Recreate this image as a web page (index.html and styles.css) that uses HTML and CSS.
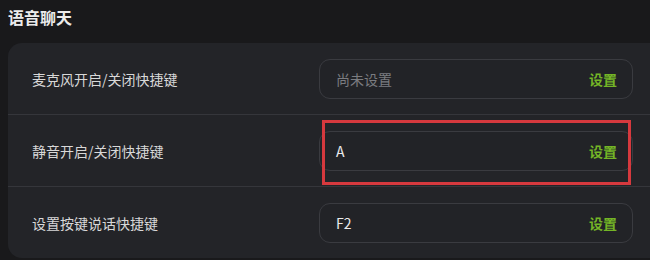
FILE: index.html
```html
<!DOCTYPE html>
<html lang="zh-CN">
<head>
<meta charset="utf-8">
<link rel="stylesheet" href="styles.css">
</head>
<body>
<div class="page">
  <h1 class="title">语音聊天</h1>
  <div class="card">
    <div class="row">
      <div class="label">麦克风开启/关闭快捷键</div>
      <div class="field">
        <span class="value placeholder">尚未设置</span>
        <span class="action">设置</span>
      </div>
    </div>
    <div class="row highlighted">
      <div class="label">静音开启/关闭快捷键</div>
      <div class="field">
        <span class="value">A</span>
        <span class="action">设置</span>
      </div>
      <div class="annot"></div>
    </div>
    <div class="row">
      <div class="label">设置按键说话快捷键</div>
      <div class="field">
        <span class="value">F2</span>
        <span class="action">设置</span>
      </div>
    </div>
  </div>
</div>
</body>
</html>
```

FILE: styles.css
```css
html, body {
  margin: 0;
  padding: 0;
  background: #19191b;
  overflow: hidden;
  width: 650px;
  height: 260px;
}
body {
  font-family: "Noto Sans CJK SC", "Noto Sans", sans-serif;
  color: #e0e0e0;
}
.page {
  padding: 0 0 0 8px;
}
.title {
  margin: 0;
  height: 43px;
  line-height: 34px;
  font-size: 16px;
  font-weight: 700;
  color: #ececec;
}
.card {
  background: #232428;
  border-radius: 14px 0 0 14px;
}
.row {
  position: relative;
  display: grid;
  grid-template-columns: 287px 314px;
  align-items: center;
  height: 71px;
  padding-left: 24px;
  border-bottom: 1px solid #35363b;
}
.row:last-child {
  border-bottom: none;
  height: 71px;
}
.label {
  font-size: 14px;
  color: #d8d8d8;
}
.field {
  display: flex;
  align-items: center;
  justify-content: space-between;
  box-sizing: border-box;
  height: 40px;
  padding: 0 15px 0 16px;
  border: 1px solid #3a3b40;
  border-radius: 11px;
  background: #222327;
}
.value {
  font-size: 14px;
  color: #eaeaea;
}
.value.placeholder {
  color: #7b7c80;
}
.action {
  font-size: 14px;
  font-weight: 700;
  color: #74b526;
}
.annot {
  position: absolute;
  left: 314px;
  top: 5px;
  width: 309px;
  height: 65px;
  box-sizing: border-box;
  border: 3px solid #d6393e;
  pointer-events: none;
}
```
